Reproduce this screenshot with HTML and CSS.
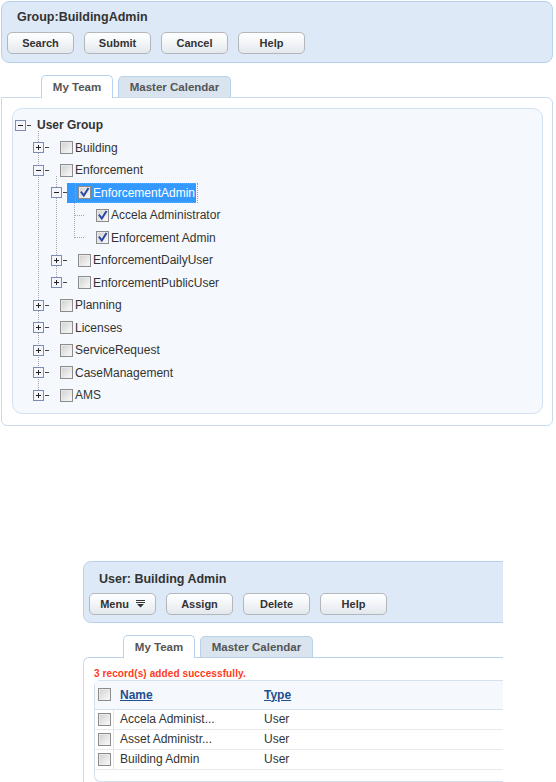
FILE: index.html
```html
<!DOCTYPE html>
<html>
<head>
<meta charset="utf-8">
<link rel="stylesheet" href="styles.css">
</head>
<body>
<div class="page1">
  <div class="hdr">
    <div class="hdr-title">Group:BuildingAdmin</div>
    <div class="btns">
      <button class="btn">Search</button>
      <button class="btn">Submit</button>
      <button class="btn">Cancel</button>
      <button class="btn">Help</button>
    </div>
  </div>
  <div class="tabs">
    <div class="tab active">My Team</div>
    <div class="tab">Master Calendar</div>
  </div>
  <div class="panel">
    <div class="tree">
      <div class="row root">
        <span class="exp"><svg width="11" height="11" viewBox="0 0 11 11"><rect x="0.5" y="0.5" width="10" height="10" class="eb"/><path d="M3 5.5h5" class="es"/></svg><i class="dash"></i></span>
        <span class="rlabel">User Group</span>
      </div>
      <div class="kids k1">
        <div class="row"><span class="exp"><svg width="11" height="11" viewBox="0 0 11 11"><rect x="0.5" y="0.5" width="10" height="10" class="eb"/><path d="M3 5.5h5M5.5 3v5" class="es"/></svg><i class="dash"></i></span><span class="item"><span class="cb"></span><span class="txt">Building</span></span></div>
        <div class="row"><span class="exp"><svg width="11" height="11" viewBox="0 0 11 11"><rect x="0.5" y="0.5" width="10" height="10" class="eb"/><path d="M3 5.5h5" class="es"/></svg><i class="dash"></i></span><span class="item"><span class="cb"></span><span class="txt">Enforcement</span></span></div>
        <div class="kids k2">
          <div class="row"><span class="exp"><svg width="11" height="11" viewBox="0 0 11 11"><rect x="0.5" y="0.5" width="10" height="10" class="eb"/><path d="M3 5.5h5" class="es"/></svg><i class="dash"></i></span><span class="item sel"><span class="focus"><span class="cb on"><svg width="11" height="11" viewBox="0 0 11 11"><path d="M2.5 5.5l2.3 3L9 1.8" class="ck"/></svg></span><span class="txt">EnforcementAdmin</span></span></span></div>
          <div class="kids k3">
            <div class="row"><span class="exp leaf"><i class="hdot"></i></span><span class="item"><span class="cb on"><svg width="11" height="11" viewBox="0 0 11 11"><path d="M2.5 5.5l2.3 3L9 1.8" class="ck"/></svg></span><span class="txt">Accela Administrator</span></span></div>
            <div class="row"><span class="exp leaf"><i class="hdot"></i></span><span class="item"><span class="cb on"><svg width="11" height="11" viewBox="0 0 11 11"><path d="M2.5 5.5l2.3 3L9 1.8" class="ck"/></svg></span><span class="txt">Enforcement Admin</span></span></div>
          </div>
          <div class="row"><span class="exp"><svg width="11" height="11" viewBox="0 0 11 11"><rect x="0.5" y="0.5" width="10" height="10" class="eb"/><path d="M3 5.5h5M5.5 3v5" class="es"/></svg><i class="dash"></i></span><span class="item"><span class="cb"></span><span class="txt">EnforcementDailyUser</span></span></div>
          <div class="row"><span class="exp"><svg width="11" height="11" viewBox="0 0 11 11"><rect x="0.5" y="0.5" width="10" height="10" class="eb"/><path d="M3 5.5h5M5.5 3v5" class="es"/></svg><i class="dash"></i></span><span class="item"><span class="cb"></span><span class="txt">EnforcementPublicUser</span></span></div>
        </div>
        <div class="row"><span class="exp"><svg width="11" height="11" viewBox="0 0 11 11"><rect x="0.5" y="0.5" width="10" height="10" class="eb"/><path d="M3 5.5h5M5.5 3v5" class="es"/></svg><i class="dash"></i></span><span class="item"><span class="cb"></span><span class="txt">Planning</span></span></div>
        <div class="row"><span class="exp"><svg width="11" height="11" viewBox="0 0 11 11"><rect x="0.5" y="0.5" width="10" height="10" class="eb"/><path d="M3 5.5h5M5.5 3v5" class="es"/></svg><i class="dash"></i></span><span class="item"><span class="cb"></span><span class="txt">Licenses</span></span></div>
        <div class="row"><span class="exp"><svg width="11" height="11" viewBox="0 0 11 11"><rect x="0.5" y="0.5" width="10" height="10" class="eb"/><path d="M3 5.5h5M5.5 3v5" class="es"/></svg><i class="dash"></i></span><span class="item"><span class="cb"></span><span class="txt">ServiceRequest</span></span></div>
        <div class="row"><span class="exp"><svg width="11" height="11" viewBox="0 0 11 11"><rect x="0.5" y="0.5" width="10" height="10" class="eb"/><path d="M3 5.5h5M5.5 3v5" class="es"/></svg><i class="dash"></i></span><span class="item"><span class="cb"></span><span class="txt">CaseManagement</span></span></div>
        <div class="row"><span class="exp"><svg width="11" height="11" viewBox="0 0 11 11"><rect x="0.5" y="0.5" width="10" height="10" class="eb"/><path d="M3 5.5h5M5.5 3v5" class="es"/></svg><i class="dash"></i></span><span class="item"><span class="cb"></span><span class="txt">AMS</span></span></div>
      </div>
    </div>
  </div>
</div>

<div class="page2">
  <div class="hdr hdr2">
    <div class="hdr-title">User: Building Admin</div>
    <div class="btns">
      <button class="btn">Menu <svg class="menu-ic" width="9" height="8" viewBox="0 0 9 8"><path d="M0 0.5h9M0 2.5h9" stroke="#333" stroke-width="1"/><path d="M1 4h7L4.5 7.5z" fill="#333"/></svg></button>
      <button class="btn">Assign</button>
      <button class="btn">Delete</button>
      <button class="btn">Help</button>
    </div>
  </div>
  <div class="tabs">
    <div class="tab active">My Team</div>
    <div class="tab">Master Calendar</div>
  </div>
  <div class="panel2">
    <div class="msg">3 record(s) added successfully.</div>
    <div class="grid">
      <div class="grow ghead">
        <div class="c0"><span class="cb"></span></div>
        <div class="c1"><a class="lnk">Name</a></div>
        <div class="c2"><a class="lnk">Type</a></div>
      </div>
      <div class="grow">
        <div class="c0"><span class="cb"></span></div>
        <div class="c1">Accela Administ...</div>
        <div class="c2">User</div>
      </div>
      <div class="grow">
        <div class="c0"><span class="cb"></span></div>
        <div class="c1">Asset Administr...</div>
        <div class="c2">User</div>
      </div>
      <div class="grow">
        <div class="c0"><span class="cb"></span></div>
        <div class="c1">Building Admin</div>
        <div class="c2">User</div>
      </div>
      <div class="gfoot"></div>
    </div>
  </div>
</div>
</body>
</html>
```

FILE: styles.css
```css
* { box-sizing: border-box; }
body {
  margin: 0;
  background: #fff;
  font-family: "Liberation Sans", Arial, sans-serif;
  font-size: 12px;
  color: #333;
}

.page1 { padding: 1px 3px 0 1px; }

.hdr {
  background: #dde9f6;
  border: 1px solid #b9d1eb;
  border-radius: 8px;
  height: 62px;
  padding: 7px 5px 0 5px;
}
.hdr-title {
  font-weight: bold;
  font-size: 12.5px;
  line-height: 16px;
  color: #333;
  padding-left: 10px;
}
.btns {
  display: flex;
  gap: 10px;
  margin-top: 7px;
}
.btn {
  width: 67px;
  height: 22px;
  border: 1px solid #b3b7bb;
  border-radius: 5px;
  background: linear-gradient(#ffffff, #f4f6f8 45%, #e3e8ee);
  font-family: "Liberation Sans", Arial, sans-serif;
  font-weight: bold;
  font-size: 11px;
  color: #333;
  padding: 0;
  display: flex;
  align-items: center;
  justify-content: center;
  gap: 7px;
}
.menu-ic { display: block; }

.tabs {
  display: flex;
  align-items: flex-end;
  gap: 5px;
  padding-left: 40px;
  margin-top: 12px;
  height: 22px;
}
.tab {
  height: 21px;
  padding: 0 10px;
  border: 1px solid #b9d1eb;
  border-bottom: none;
  border-radius: 5px 5px 0 0;
  background: #d9e4ef;
  color: #555;
  font-weight: bold;
  font-size: 11.5px;
  display: flex;
  align-items: center;
  justify-content: center;
  width: 113px;
}
.tab.active {
  width: 72px;
  height: 23px;
  background: #fff;
  margin-bottom: -1px;
  position: relative;
  z-index: 1;
  color: #555;
}

.panel {
  border: 1px solid #c9dbee;
  border-radius: 0 6px 6px 6px;
  padding: 10px 9px 11px 10px;
  background: #fff;
}
.tree {
  background: #f5f9fd;
  border: 1px solid #d3e2f2;
  border-radius: 10px;
  padding: 5px 0 6px 2px;
}

.row {
  display: flex;
  align-items: center;
  height: 22.5px;
}
.exp {
  display: flex;
  align-items: center;
  width: 16px;
  height: 11px;
  flex: none;
  position: relative;
  z-index: 1;
}
.exp svg { display: block; flex: none; }
.eb { fill: #f4f6fb; stroke: #7c8db3; stroke-width: 1; }
.es { stroke: #222; stroke-width: 1; shape-rendering: crispEdges; }
.dash {
  display: block;
  width: 4px;
  height: 1px;
  margin-left: 1px;
  background: #444;
}
.root .exp { width: 22px; }
.rlabel { font-weight: bold; color: #333; }

.item {
  display: flex;
  align-items: center;
  height: 20px;
  padding-left: 11px;
  padding-right: 1px;
  color: #333;
}
.txt { margin-left: 2px; white-space: nowrap; }
.sel { background: #3399ff; }
.sel .txt { color: #fff; }
.focus {
  display: flex;
  align-items: center;
  outline: 1px dotted #e0913a;
  outline-offset: 2px;
}

.cb {
  display: inline-flex;
  align-items: center;
  justify-content: center;
  width: 13px;
  height: 13px;
  flex: none;
  border: 1px solid #8c8c8c;
  background: linear-gradient(135deg, #cfcfcf, #f3f3f3 80%);
  box-shadow: inset 1px 1px 0 #e9e9e9;
}
.cb svg { display: block; }
.ck { fill: none; stroke: #2a47a6; stroke-width: 2; stroke-linecap: square; }

.kids {
  position: relative;
  margin-left: 18px;
}
.kids::before {
  content: "";
  position: absolute;
  left: 5px;
  top: -6px;
  bottom: 11px;
  border-left: 1px dotted #a7a7a7;
}
.k3::before { top: -1px; }
.leaf { position: relative; }
.hdot {
  display: block;
  margin-left: 6px;
  width: 9px;
  height: 0;
  border-top: 1px dotted #a7a7a7;
}

/* second section */
.page2 {
  margin: 135px 0 0 83px;
  width: 420px;
  overflow: hidden;
}
.hdr2 {
  width: 560px;
  border-radius: 8px 0 0 8px;
  padding-top: 9px;
  padding-left: 5px;
}
.hdr2 .hdr-title { padding-left: 10px; }
.hdr2 .btns { margin-top: 6px; }
.page2 .tabs { padding-left: 40px; }
.panel2 {
  width: 560px;
  border-top: 1px solid #b9d1eb;
  border-left: 1px solid #c9dbee;
  border-radius: 6px 0 0 0;
  padding: 10px 0 0 10px;
  height: 126px;
}
.msg {
  color: #ff3b1a;
  font-weight: bold;
  font-size: 10px;
  line-height: 12px;
  letter-spacing: 0.1px;
}
.grid {
  margin-top: 0;
  border: 1px solid #d3e1ef;
  border-right: none;
  border-radius: 6px 0 0 6px;
}
.grow {
  display: flex;
  height: 20px;
  border-bottom: 1px solid #e9e9e9;
}
.ghead {
  height: 29px;
  background: #f5f9fd;
  border-bottom: 1px solid #d3e1ef;
}
.c0 {
  width: 19px;
  display: flex;
  align-items: center;
  padding-left: 3px;
  border-right: 1px solid #dde6ef;
}
.ghead .c0 { border-right: none; }
.c1 {
  width: 150px;
  display: flex;
  align-items: center;
  padding-left: 6px;
  white-space: nowrap;
}
.c2 {
  display: flex;
  align-items: center;
  white-space: nowrap;
}
.lnk {
  color: #1e4f8f;
  font-weight: bold;
  text-decoration: underline;
}
.gfoot { height: 11px; }
```
